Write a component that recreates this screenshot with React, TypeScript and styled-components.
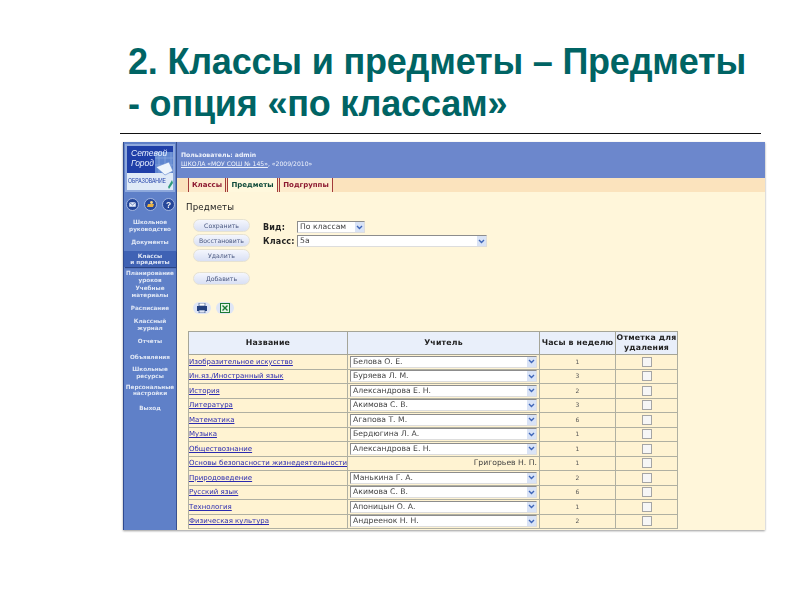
import React from 'react';
import styled, { createGlobalStyle } from 'styled-components';

const GlobalStyle = createGlobalStyle`
  html, body {
    margin: 0;
    padding: 0;
    background: #fff;
  }
`;

const Slide = styled.div`
  width: 800px;
  height: 600px;
  overflow: hidden;
  display: flex;
  flex-direction: column;
  background: #fff;
`;

const Title = styled.h1`
  margin: 41px 0 0 128px;
  height: 87px;
  font: bold 36px/42px "Liberation Sans", Arial, sans-serif;
  color: #006464;
  letter-spacing: -0.2px;
`;

const Rule = styled.div`
  margin: 5px 0 0 120px;
  width: 641px;
  height: 1px;
  background: #111;
`;

const Panel = styled.div`
  margin: 8px 0 0 123px;
  width: 642px;
  height: 388px;
  display: flex;
  box-shadow: 0 1px 2px #9a9a9a;
  font-family: "DejaVu Sans", Verdana, sans-serif;
  filter: blur(0.3px);
`;

const Sidebar = styled.nav`
  width: 54px;
  flex: none;
  box-sizing: border-box;
  background: #5f80c8;
  border-left: 1px solid #2f4a8f;
  border-right: 1px solid #37508f;
  display: flex;
  flex-direction: column;
  align-items: stretch;
  padding-top: 2px;
`;

const LogoBox = styled.svg`
  display: block;
  margin-left: 1px;
`;

const RoundIcons = styled.div`
  display: flex;
  justify-content: space-between;
  padding: 6px 1.5px 0;
  margin-bottom: 8px;
`;

const NavItem = styled.div<{ $top: number; $active?: boolean }>`
  margin-top: ${p => p.$top}px;
  padding: ${p => (p.$active ? '2px 0 1px' : '0')};
  background: ${p => (p.$active ? '#3f62b4' : 'transparent')};
  box-shadow: ${p => (p.$active ? '1px 1px 1px #2c4585' : 'none')};
  color: #dfe6f5;
  font-size: 5.7px;
  font-weight: bold;
  line-height: 6.6px;
  text-align: center;
  white-space: nowrap;
`;

const Main = styled.div`
  flex: 1;
  display: flex;
  flex-direction: column;
  min-width: 0;
`;

const TopBar = styled.header`
  height: 36px;
  background: #6c87cc;
  box-sizing: border-box;
  padding: 9px 0 0 4px;
  color: #eef2fb;
  font-size: 6.1px;
  line-height: 8.5px;
`;

const UserLine = styled.div`
  font-weight: bold;
`;

const SchoolLine = styled.span`
  text-decoration: underline;
`;

const TabStrip = styled.div`
  height: 14px;
  background: #fbe3bd;
  display: flex;
  padding-left: 11px;
  box-sizing: border-box;
`;

const Tab = styled.div<{ $active?: boolean; $width: number }>`
  width: ${p => p.$width}px;
  box-sizing: border-box;
  background: ${p => (p.$active ? '#fff8dd' : '#fdeccd')};
  border-left: 1px solid #a33a3a;
  border-right: 1px solid #a33a3a;
  margin-right: 1px;
  font-size: 7px;
  font-weight: bold;
  line-height: 14px;
  text-align: center;
  color: ${p => (p.$active ? '#0f4a3a' : '#8c1830')};
`;

const Content = styled.div`
  flex: 1;
  background: #fff6da;
  padding: 8px 0 0 9px;
  display: flex;
  flex-direction: column;
`;

const PageHeading = styled.div`
  margin-top: 2px;
  font-size: 8.6px;
  line-height: 10px;
  color: #222;
  letter-spacing: 0.2px;
`;

const Controls = styled.div`
  margin-top: 7px;
  display: flex;
  padding-left: 7px;
`;

const ButtonColumn = styled.div`
  width: 70px;
  display: flex;
  flex-direction: column;
`;

const PillButton = styled.div<{ $gap?: number }>`
  width: 57px;
  height: 13px;
  margin-top: ${p => p.$gap ?? 2}px;
  border-radius: 7px;
  background: linear-gradient(#f4f6fd, #d9e0f4);
  border: 1px solid #e6e2d2;
  box-sizing: border-box;
  font-size: 6.2px;
  line-height: 11px;
  text-align: center;
  color: #4a5880;
  white-space: nowrap;
`;

const IconRow = styled.div`
  display: flex;
  gap: 5px;
  margin-top: 17px;
`;

const IconPill = styled.div`
  width: 18px;
  height: 12px;
  border-radius: 7px;
  background: #dfe5f5;
  display: flex;
  align-items: center;
  justify-content: center;
`;

const FormGrid = styled.div`
  display: grid;
  grid-template-columns: 34px auto;
  grid-auto-rows: 14px;
  align-items: center;
  justify-items: start;
  margin-top: 1px;
  height: 28px;
`;

const FieldLabel = styled.div`
  font-size: 8px;
  font-weight: bold;
  color: #222;
  letter-spacing: 0.2px;
`;

const SelectBox = styled.div<{ $width: string }>`
  width: ${p => p.$width};
  height: 12px;
  background: #fff;
  border: 1px solid #8d8d8d;
  border-right-color: #ddd;
  border-bottom-color: #ddd;
  box-sizing: border-box;
  display: flex;
  align-items: center;
  justify-content: space-between;
  font-size: 7.7px;
  line-height: 10px;
  color: #444;
  padding-left: 2px;
  overflow: hidden;
  white-space: nowrap;
`;

const SelectArrow = styled.span`
  width: 9px;
  height: 10px;
  flex: none;
  background: #d9e3f6;
  display: flex;
  align-items: center;
  justify-content: center;
`;

const SubjectTable = styled.table`
  margin: 17px 0 0 2px;
  width: 489px;
  table-layout: fixed;
  border-collapse: collapse;
  font-size: 7.7px;
`;

const HeadCell = styled.th`
  height: 22px;
  padding: 0;
  background: #e9effa;
  border: 1px solid #a5a598;
  font-size: 7.8px;
  line-height: 10px;
  color: #222;
  letter-spacing: 0.2px;
  white-space: nowrap;
`;

const Row = styled.tr`
  height: 14.5px;
`;

const Cell = styled.td<{ $center?: boolean; $right?: boolean; $flush?: boolean }>`
  padding: ${p => (p.$flush ? '0' : '0 2px')};
  border: 1px solid #b0b0a2;
  background: #fff3d2;
  text-align: ${p => (p.$center ? 'center' : p.$right ? 'right' : 'left')};
  white-space: nowrap;
  overflow: hidden;
  color: #444;
  line-height: 10px;
`;

const SubjectLink = styled.a`
  color: #2b2bb0;
  text-decoration: underline;
  font-size: 7px;
`;

const Hours = styled.span`
  font-size: 6px;
  color: #555;
`;

const CheckMark = styled.span`
  display: block;
  margin: 0 auto;
  width: 8px;
  height: 8px;
  border: 1px solid #a5a5a5;
  background: #f6f6f6;
`;

type Subject = { name: string; teacher: string; hours: number; fixed?: boolean };

const subjects: Subject[] = [
  { name: 'Изобразительное искусство', teacher: 'Белова О. Е.', hours: 1 },
  { name: 'Ин.яз./Иностранный язык', teacher: 'Буряева Л. М.', hours: 3 },
  { name: 'История', teacher: 'Александрова Е. Н.', hours: 2 },
  { name: 'Литература', teacher: 'Акимова С. В.', hours: 3 },
  { name: 'Математика', teacher: 'Агапова Т. М.', hours: 6 },
  { name: 'Музыка', teacher: 'Бердюгина Л. А.', hours: 1 },
  { name: 'Обществознание', teacher: 'Александрова Е. Н.', hours: 1 },
  { name: 'Основы безопасности жизнедеятельности', teacher: 'Григорьев Н. П.', hours: 1, fixed: true },
  { name: 'Природоведение', teacher: 'Манькина Г. А.', hours: 2 },
  { name: 'Русский язык', teacher: 'Акимова С. В.', hours: 6 },
  { name: 'Технология', teacher: 'Апоницын О. А.', hours: 1 },
  { name: 'Физическая культура', teacher: 'Андреенок Н. Н.', hours: 2 },
];

const navItems: { lines: string[]; top: number; active?: boolean }[] = [
  { lines: ['Школьное', 'руководство'], top: 0 },
  { lines: ['Документы'], top: 7 },
  { lines: ['Классы', 'и предметы'], top: 5, active: true },
  { lines: ['Планирование', 'уроков'], top: 3 },
  { lines: ['Учебные', 'материалы'], top: 2 },
  { lines: ['Расписание'], top: 7 },
  { lines: ['Классный', 'журнал'], top: 6 },
  { lines: ['Отчеты'], top: 7 },
  { lines: ['Объявления'], top: 9 },
  { lines: ['Школьные', 'ресурсы'], top: 6 },
  { lines: ['Персональные', 'настройки'], top: 4 },
  { lines: ['Выход'], top: 8 },
];

const Arrow = () => (
  <SelectArrow>
    <svg width="7" height="5" viewBox="0 0 7 5">
      <path d="M1 1l2.5 2.5L6 1" fill="none" stroke="#3f66b8" strokeWidth="1.4" />
    </svg>
  </SelectArrow>
);

const Logo = () => (
  <LogoBox width="50" height="48" viewBox="0 0 50 48">
    <rect width="50" height="48" fill="#8fa9dc" />
    <rect x="2" y="2" width="46" height="28" fill="#1f3fa8" />
    <path d="M30 8h18v22H30z" fill="#5f86cf" />
    <path d="M34 8v22M40 8v22M46 8v22M30 14h18M30 21h18" stroke="#8eaae0" strokeWidth="0.7" />
    <rect x="2" y="29" width="46" height="17" fill="#dfeaf7" />
    <path d="M31 23l13-5 4 9-8 4z" fill="#eef5fc" stroke="#5f86cf" strokeWidth="0.6" />
    <path d="M43 43l4-7 1 3-4 6z" fill="#2f9a7c" />
    <text x="6" y="12" fontFamily="Liberation Sans" fontStyle="italic" fontSize="8.5" fill="#e8f0ff">Сетевой</text>
    <text x="6" y="22" fontFamily="Liberation Sans" fontStyle="italic" fontSize="8.5" fill="#e8f0ff">Город</text>
    <text x="3" y="39" fontFamily="Liberation Sans" fontSize="7.5" fill="#1f3fa8" textLength="38" lengthAdjust="spacingAndGlyphs">ОБРАЗОВАНИЕ</text>
  </LogoBox>
);

const RoundIcon = ({ children }: { children: React.ReactNode }) => (
  <svg width="13" height="13" viewBox="0 0 13 13">
    <circle cx="6.5" cy="6.5" r="6" fill="#26479a" stroke="#b9c8ea" strokeWidth="0.8" />
    {children}
  </svg>
);

const App: React.FC = () => (
  <Slide>
    <GlobalStyle />
    <Title>
      2. Классы и предметы – Предметы
      <br />- опция «по классам»
    </Title>
    <Rule />
    <Panel>
      <Sidebar>
        <Logo />
        <RoundIcons>
          <RoundIcon>
            <rect x="3" y="4" width="7" height="5" fill="#e8eefb" stroke="#1f3f8e" strokeWidth="0.5" />
            <path d="M3 4l3.5 3L10 4" fill="none" stroke="#1f3f8e" strokeWidth="0.6" />
          </RoundIcon>
          <RoundIcon>
            <path d="M3 9l1-3h6l-1 3z" fill="#e8b040" />
            <circle cx="7.5" cy="4.5" r="1.4" fill="#f3d48a" />
          </RoundIcon>
          <RoundIcon>
            <text x="6.5" y="9.5" textAnchor="middle" fontFamily="Liberation Sans" fontWeight="bold" fontSize="8.5" fill="#f0f0f0">?</text>
          </RoundIcon>
        </RoundIcons>
        {navItems.map(item => (
          <NavItem key={item.lines[0]} $top={item.top} $active={item.active}>
            {item.lines.map(line => (
              <div key={line}>{line}</div>
            ))}
          </NavItem>
        ))}
      </Sidebar>
      <Main>
        <TopBar>
          <UserLine>Пользователь: admin</UserLine>
          <SchoolLine>ШКОЛА «МОУ СОШ № 145»</SchoolLine>, «2009/2010»
        </TopBar>
        <TabStrip>
          <Tab $width={38}>Классы</Tab>
          <Tab $width={51} $active>Предметы</Tab>
          <Tab $width={54}>Подгруппы</Tab>
        </TabStrip>
        <Content>
          <PageHeading>Предметы</PageHeading>
          <Controls>
            <ButtonColumn>
              <PillButton $gap={0}>Сохранить</PillButton>
              <PillButton>Восстановить</PillButton>
              <PillButton>Удалить</PillButton>
              <PillButton $gap={10}>Добавить</PillButton>
              <IconRow>
                <IconPill>
                  <svg width="12" height="10" viewBox="0 0 12 10">
                    <path d="M3 0h6v3H3z" fill="#fff" stroke="#24407e" strokeWidth="0.6" />
                    <path d="M1 3h10v5H1z" fill="#24407e" />
                    <path d="M3 7h6v3H3z" fill="#dfe5f5" stroke="#24407e" strokeWidth="0.6" />
                  </svg>
                </IconPill>
                <IconPill>
                  <svg width="10" height="10" viewBox="0 0 10 10">
                    <rect x="0.5" y="0.5" width="9" height="9" fill="#e8f5e8" stroke="#1c7a34" />
                    <path d="M2.5 2.5l5 5M7.5 2.5l-5 5" stroke="#1c7a34" strokeWidth="1.4" />
                  </svg>
                </IconPill>
              </IconRow>
            </ButtonColumn>
            <FormGrid>
              <FieldLabel>Вид:</FieldLabel>
              <SelectBox $width="68px">
                По классам
                <Arrow />
              </SelectBox>
              <FieldLabel>Класс:</FieldLabel>
              <SelectBox $width="190px">
                5а
                <Arrow />
              </SelectBox>
            </FormGrid>
          </Controls>
          <SubjectTable>
            <colgroup>
              <col style={{ width: 159 }} />
              <col style={{ width: 192 }} />
              <col style={{ width: 76 }} />
              <col style={{ width: 62 }} />
            </colgroup>
            <thead>
              <tr>
                <HeadCell>Название</HeadCell>
                <HeadCell>Учитель</HeadCell>
                <HeadCell>Часы в неделю</HeadCell>
                <HeadCell>
                  Отметка для
                  <br />
                  удаления
                </HeadCell>
              </tr>
            </thead>
            <tbody>
              {subjects.map(subject => (
                <Row key={subject.name}>
                  <Cell $flush>
                    <SubjectLink>{subject.name}</SubjectLink>
                  </Cell>
                  {subject.fixed ? (
                    <Cell $right>{subject.teacher}</Cell>
                  ) : (
                    <Cell>
                      <SelectBox $width="100%">
                        {subject.teacher}
                        <Arrow />
                      </SelectBox>
                    </Cell>
                  )}
                  <Cell $center>
                    <Hours>{subject.hours}</Hours>
                  </Cell>
                  <Cell $center>
                    <CheckMark />
                  </Cell>
                </Row>
              ))}
            </tbody>
          </SubjectTable>
        </Content>
      </Main>
    </Panel>
  </Slide>
);

export default App;
